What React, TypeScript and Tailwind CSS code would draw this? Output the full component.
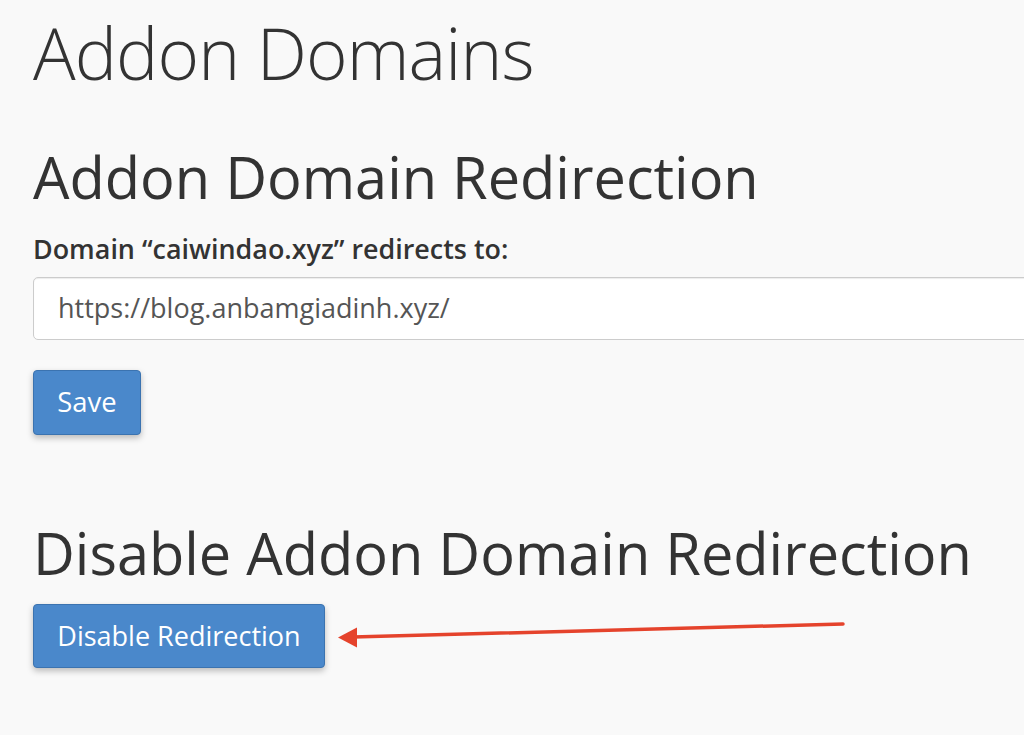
export default function App() {
  return (
    <div
      className="min-h-[735px] w-[1024px] overflow-hidden bg-[#f9f9f9] text-[#333]"
      style={{ fontFamily: '"Open Sans", "Noto Sans", sans-serif' }}
    >
      <div className="pl-[33px] pt-[14px]">
        <h1 className="text-[71px] font-light leading-[1.1] tracking-[-0.9px]">Addon Domains</h1>

        <h2 className="mt-[53px] text-[57.7px] font-normal leading-[1.1]">Addon Domain Redirection</h2>

        <label className="mt-[23px] block text-[26.9px] font-semibold leading-[1.3]">
          Domain “caiwindao.xyz” redirects to:
        </label>
        <div className="mt-[10px] -mr-[20px] flex h-[63px] items-center rounded-[5px] border border-[#ccc] bg-white pl-[24px] shadow-[inset_0_1px_1px_rgba(0,0,0,0.075)]">
          <span className="text-[27px] text-[#555]">https://blog.anbamgiadinh.xyz/</span>
        </div>

        <button className="mt-[30px] flex h-[65px] w-[108px] items-center justify-center rounded-[4px] border border-[#3b73b0] bg-[#4a88cb] text-[27.4px] text-white shadow-[0_3px_6px_rgba(0,0,0,0.25)]">
          Save
        </button>

        <h2 className="mt-[86px] text-[57.7px] font-normal leading-[1.1]">Disable Addon Domain Redirection</h2>

        <div className="relative mt-[20px]">
          <button className="flex h-[64px] w-[292px] items-center justify-center rounded-[4px] border border-[#3b73b0] bg-[#4a88cb] text-[27px] text-white shadow-[0_3px_6px_rgba(0,0,0,0.25)]">
            Disable Redirection
          </button>
          <svg className="absolute left-[300px] top-[10px]" width="520" height="40" viewBox="0 0 520 40">
            <line x1="510" y1="10" x2="20" y2="23" stroke="#e5432c" strokeWidth="3.5" strokeLinecap="round" />
            <polygon points="5,23.5 24,13.5 24,33.5" fill="#e5432c" />
          </svg>
        </div>
      </div>
    </div>
  )
}
